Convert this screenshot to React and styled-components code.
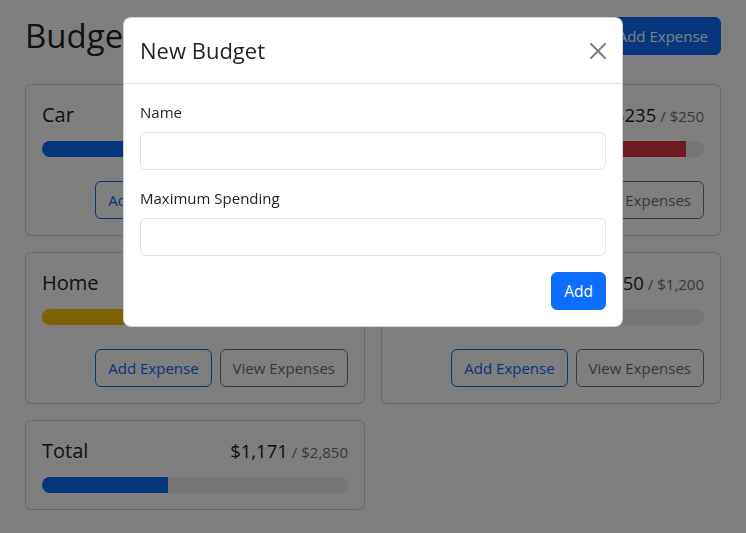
import React from "react";
import styled, { createGlobalStyle, css } from "styled-components";

const GlobalStyle = createGlobalStyle`
    * { box-sizing : border-box; }
    body {
        margin : 0;
        background-color : #ffffff;
        color : #212529;
        font-family : "Open Sans", "Noto Sans", sans-serif;
        font-size : 15px;
        line-height : 24px;
    }
`

const Page = styled.div`
    padding : 16px 25px 24px 25px;
`

const Header = styled.div`
    display : flex;
    align-items : center;
    gap : 8px;
    height : 40px;
    margin-bottom : 28px;
`

const PageTitle = styled.h1`
    margin : 0 auto 0 0;
    font-size : 33px;
    font-weight : 500;
    line-height : 1.2;
`

const Button = styled.button`
    font-family : inherit;
    font-size : ${(props) => (props.small ? "15.5px" : "15px")};
    line-height : 24px;
    padding : 6px 12px;
    border-radius : 6px;
    border : 1px solid transparent;
    cursor : pointer;
    white-space : nowrap;
    ${(props) => props.variant === "primary" && css`
        background-color : #0d6efd;
        border-color : #0d6efd;
        color : #ffffff;
    `}
    ${(props) => props.variant === "outline-primary" && css`
        background-color : transparent;
        border-color : #0d6efd;
        color : #0d6efd;
    `}
    ${(props) => props.variant === "outline-secondary" && css`
        background-color : transparent;
        border-color : #6c757d;
        color : #6c757d;
    `}
`

const Grid = styled.div`
    display : grid;
    grid-template-columns : repeat(auto-fill, minmax(300px, 1fr));
    gap : 16px;
    align-items : start;
`

const Card = styled.div`
    border : 1px solid rgba(0, 0, 0, 0.175);
    border-radius : 6px;
    padding : 16px;
    background-color : #ffffff;
`

const CardTitle = styled.div`
    display : flex;
    justify-content : space-between;
    align-items : baseline;
    height : 26px;
    padding-top : 2px;
    font-size : 20px;
    line-height : 24px;
    margin-bottom : 14px;
`

const Amount = styled.div`
    display : flex;
    align-items : baseline;
    font-size : 18.5px;
`

const MaxAmount = styled.span`
    color : #6c757d;
    font-size : 15px;
    line-height : 1;
    margin-left : 4px;
`

const Track = styled.div`
    height : 16px;
    border-radius : 999px;
    background-color : #e9ecef;
    overflow : hidden;
    display : flex;
`

const Fill = styled.div`
    height : 100%;
    background-color : ${(props) => props.barColor};
`

const Actions = styled.div`
    display : flex;
    justify-content : flex-end;
    gap : 8px;
    margin-top : 24px;
`

const Backdrop = styled.div`
    position : fixed;
    inset : 0;
    background-color : rgba(0, 0, 0, 0.5);
`

const Modal = styled.div`
    position : fixed;
    top : 17px;
    left : 50%;
    transform : translateX(-50%);
    width : 500px;
    background-color : #ffffff;
    border : 1px solid rgba(0, 0, 0, 0.175);
    border-radius : 8px;
`

const ModalHeader = styled.div`
    display : flex;
    align-items : center;
    justify-content : space-between;
    padding : 16px;
    border-bottom : 1px solid #dee2e6;
`

const ModalTitle = styled.div`
    font-size : 22px;
    font-weight : 500;
    line-height : 33px;
`

const CloseButton = styled.button`
    display : flex;
    padding : 0;
    border : none;
    background : transparent;
    opacity : 0.5;
    cursor : pointer;
`

const ModalBody = styled.div`
    padding : 16px;
`

const Field = styled.div`
    margin-bottom : 16px;
`

const Label = styled.label`
    display : block;
    margin-bottom : 8px;
`

const Input = styled.input`
    display : block;
    width : 100%;
    height : 38px;
    padding : 6px 12px;
    font-family : inherit;
    font-size : 15px;
    border : 1px solid #dee2e6;
    border-radius : 6px;
`

const FormFooter = styled.div`
    display : flex;
    justify-content : flex-end;
`

const budgets = [
    { name : "Car", amount : 136, max : 400 },
    { name : "Food", amount : 235, max : 250 },
    { name : "Home", amount : 650, max : 1000 },
    { name : "Utilities", amount : 150, max : 1200 },
]

const money = (n) => "$" + n.toLocaleString("en-US")

const barColor = (ratio) => {
    if (ratio < 0.5) return "#0d6efd"
    if (ratio < 0.75) return "#ffc107"
    return "#dc3545"
}

const BudgetCard = ({ name, amount, max, hideButtons }) => {
    const ratio = amount / max
    return (
        <Card>
            <CardTitle>
                <div>{name}</div>
                <Amount>
                    {money(amount)}
                    <MaxAmount>/ {money(max)}</MaxAmount>
                </Amount>
            </CardTitle>
            <Track>
                <Fill barColor={barColor(ratio)} style={{ width : `${ratio * 100}%` }} />
            </Track>
            {!hideButtons && (
                <Actions>
                    <Button variant="outline-primary">Add Expense</Button>
                    <Button variant="outline-secondary">View Expenses</Button>
                </Actions>
            )}
        </Card>
    )
}

const CloseIcon = () => (
    <svg width="16" height="16" viewBox="0 0 16 16" fill="#000">
        <path d="M.293.293a1 1 0 0 1 1.414 0L8 6.586 14.293.293a1 1 0 1 1 1.414 1.414L9.414 8l6.293 6.293a1 1 0 0 1-1.414 1.414L8 9.414l-6.293 6.293a1 1 0 0 1-1.414-1.414L6.586 8 .293 1.707a1 1 0 0 1 0-1.414z" />
    </svg>
)

const App = () => {
    const totalAmount = budgets.reduce((s, b) => s + b.amount, 0)
    const totalMax = budgets.reduce((s, b) => s + b.max, 0)

    return (
        <>
            <GlobalStyle />
            <Page>
                <Header>
                    <PageTitle>Budgets</PageTitle>
                    <Button variant="primary">Add Budget</Button>
                    <Button variant="primary">Add Expense</Button>
                </Header>
                <Grid>
                    {budgets.map((b) => (
                        <BudgetCard key={b.name} {...b} />
                    ))}
                    <BudgetCard name="Total" amount={totalAmount} max={totalMax} hideButtons />
                </Grid>
            </Page>

            <Backdrop />
            <Modal>
                <ModalHeader>
                    <ModalTitle>New Budget</ModalTitle>
                    <CloseButton aria-label="Close"><CloseIcon /></CloseButton>
                </ModalHeader>
                <ModalBody>
                    <Field>
                        <Label>Name</Label>
                        <Input type="text" />
                    </Field>
                    <Field>
                        <Label>Maximum Spending</Label>
                        <Input type="number" />
                    </Field>
                    <FormFooter>
                        <Button variant="primary" small>Add</Button>
                    </FormFooter>
                </ModalBody>
            </Modal>
        </>
    )
};

export default App;
